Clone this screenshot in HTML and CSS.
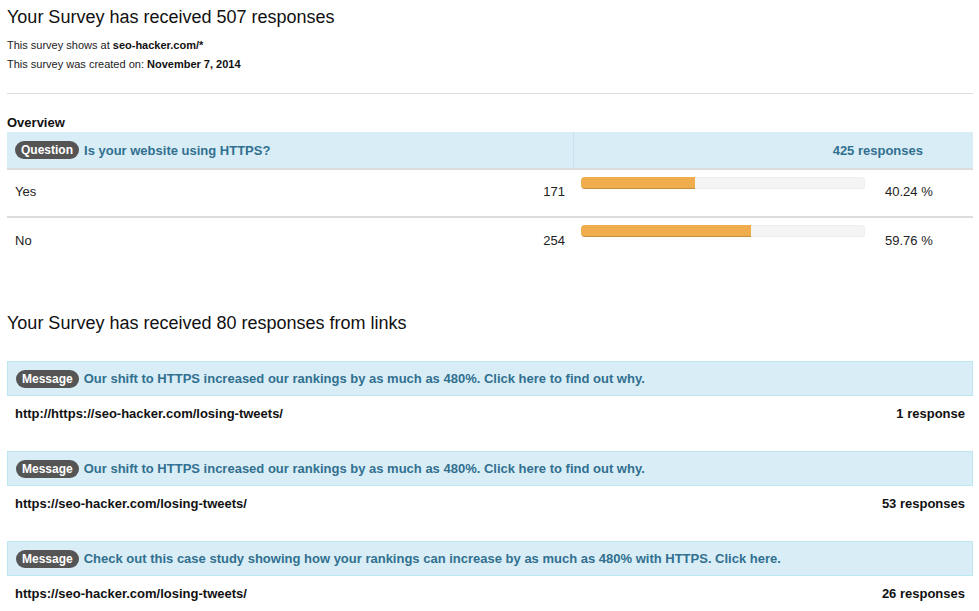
FILE: index.html
```html
<!DOCTYPE html>
<html lang="en">
<head>
    <meta charset="UTF-8">
    <title>Survey responses</title>
    <link rel="stylesheet" href="styles.css">
</head>
<body>
    <div class="page">
        <h1>Your Survey has received 507 responses</h1>
        <p class="meta">This survey shows at <b>seo-hacker.com/*</b></p>
        <p class="meta">This survey was created on: <b>November 7, 2014</b></p>
        <hr>

        <h3 class="overview">Overview</h3>
        <div class="results">
            <div class="head left"><span class="badge">Question</span> Is your website using HTTPS?</div>
            <div class="head right">425 responses</div>

            <div class="cell label">Yes</div>
            <div class="cell count">171</div>
            <div class="cell bar-cell"><div class="bar"><div class="fill" style="width: 40.24%"></div></div></div>
            <div class="cell pct">40.24 %</div>

            <div class="cell label last">No</div>
            <div class="cell count last">254</div>
            <div class="cell bar-cell last"><div class="bar"><div class="fill" style="width: 59.76%"></div></div></div>
            <div class="cell pct last">59.76 %</div>
        </div>

        <h2>Your Survey has received 80 responses from links</h2>

        <div class="link-block">
            <div class="message"><span class="badge">Message</span> Our shift to HTTPS increased our rankings by as much as 480%. Click here to find out why.</div>
            <div class="link-row"><span>http://https://seo-hacker.com/losing-tweets/</span><span>1 response</span></div>
        </div>
        <div class="link-block">
            <div class="message"><span class="badge">Message</span> Our shift to HTTPS increased our rankings by as much as 480%. Click here to find out why.</div>
            <div class="link-row"><span>https://seo-hacker.com/losing-tweets/</span><span>53 responses</span></div>
        </div>
        <div class="link-block">
            <div class="message"><span class="badge">Message</span> Check out this case study showing how your rankings can increase by as much as 480% with HTTPS. Click here.</div>
            <div class="link-row"><span>https://seo-hacker.com/losing-tweets/</span><span>26 responses</span></div>
        </div>
    </div>
</body>
</html>
```

FILE: styles.css
```css
body {
    margin: 0;
    font-family: "Liberation Sans", Arial, sans-serif;
    color: #222;
    background: #fff;
}

.page {
    padding: 0 6px 0 7px;
}

h1, h2 {
    font-size: 18px;
    font-weight: normal;
    line-height: 22px;
    color: #111;
    margin: 6px 0 0;
}

h2 {
    margin-top: 46px;
}

.meta {
    font-size: 11px;
    line-height: 19px;
    margin: 0;
}
h1 + .meta {
    margin-top: 8px;
}
.meta b {
    color: #111;
}

hr {
    border: none;
    border-top: 1px solid #ddd;
    margin: 19px 0 0;
}

.overview {
    font-size: 13px;
    line-height: 18px;
    margin: 20px 0 0;
    color: #111;
}

.badge {
    display: inline-block;
    background: #555;
    color: #fff;
    font-size: 12px;
    font-weight: bold;
    line-height: 16px;
    padding: 1px 6px;
    border-radius: 9px;
    margin-right: 1px;
    vertical-align: 1px;
}

/* tabla de resultados */
.results {
    display: grid;
    grid-template-columns: 1fr 80px 300px 100px;
    font-size: 13px;
}

.head {
    background: #d9edf7;
    color: #31708f;
    font-weight: bold;
    height: 36px;
    display: flex;
    align-items: center;
    border-bottom: 2px solid #ddd;
}
.head.left {
    grid-column: 1 / 3;
    padding-left: 8px;
    gap: 4px;
}
.head.right {
    grid-column: 3 / 5;
    justify-content: flex-end;
    padding-right: 50px;
    border-left: 1px solid #c4e3f1;
}

.cell {
    height: 48px;
    box-sizing: border-box;
    border-bottom: 2px solid #ddd;
    padding: 13px 8px 0;
    line-height: 18px;
}
.cell.last {
    border-bottom: none;
    padding-top: 14px;
}
.count {
    text-align: right;
}
.pct {
    padding-left: 12px;
}
.bar-cell,
.bar-cell.last {
    padding-top: 7px;
}

.bar {
    height: 12px;
    background: #f4f4f4;
    border-radius: 4px;
    box-shadow: inset 0 0 0 1px #eee;
    overflow: hidden;
}
.fill {
    height: 100%;
    background: #efad4d;
    box-shadow: inset 0 -1px 0 rgba(0, 0, 0, 0.18);
}

/* bloques de enlaces */
.link-block {
    margin-bottom: 20px;
}
h2 + .link-block {
    margin-top: 27px;
}

.message {
    background: #d9edf7;
    border: 1px solid #bce8f1;
    color: #31708f;
    font-size: 13px;
    font-weight: bold;
    height: 33px;
    display: flex;
    align-items: center;
    gap: 4px;
    padding-left: 8px;
}

.link-row {
    display: flex;
    justify-content: space-between;
    font-size: 13px;
    font-weight: bold;
    color: #111;
    line-height: 18px;
    padding: 9px 8px 8px;
}
```
